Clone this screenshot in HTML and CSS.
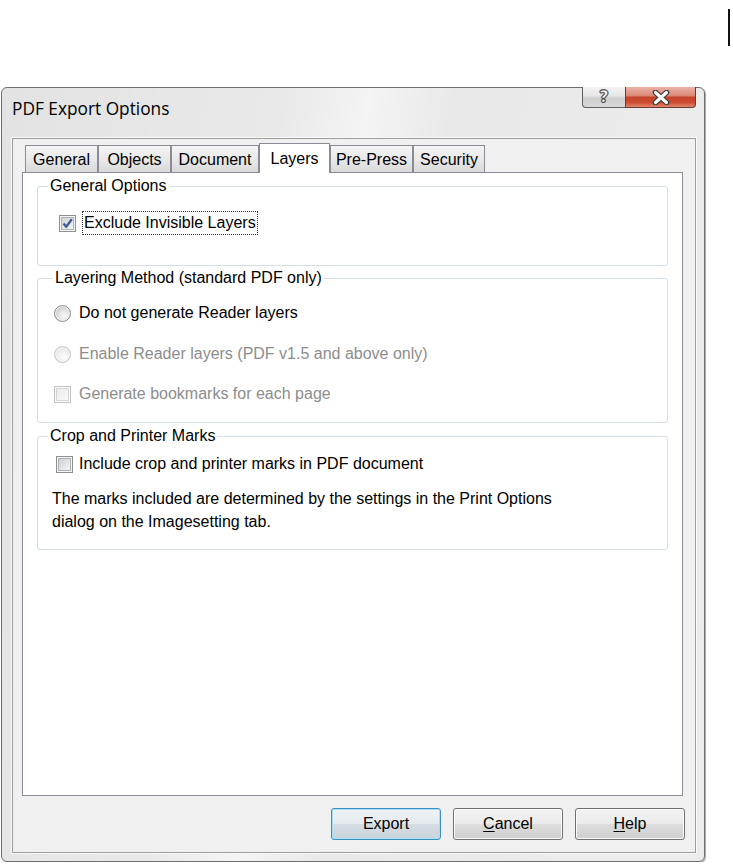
FILE: index.html
```html
<!DOCTYPE html>
<html lang="en">
<head>
    <meta charset="UTF-8">
    <meta name="viewport" content="width=device-width, initial-scale=1.0">
    <title>PDF Export Options</title>
    <link rel="stylesheet" href="styles.css">
</head>
<body>

    <span class="edge-mark"></span>

    <div class="window">
        <div class="titlebar">
            <span class="title">PDF Export Options</span>
            <div class="caption-buttons">
                <span class="cap-btn help-btn">?</span>
                <span class="cap-btn close-btn">
                    <svg width="20" height="15" viewBox="0 0 20 15">
                        <path d="M4.5 2.5 L15.5 12.5 M15.5 2.5 L4.5 12.5" stroke="#3b3b3b" stroke-width="5.6" stroke-linecap="round"/>
                        <path d="M4.5 2.5 L15.5 12.5 M15.5 2.5 L4.5 12.5" stroke="#fff" stroke-width="3.2" stroke-linecap="round"/>
                    </svg>
                </span>
            </div>
        </div>

        <div class="client">
            <div class="tabs">
                <span class="tab tab-general">General</span>
                <span class="tab tab-objects">Objects</span>
                <span class="tab tab-document">Document</span>
                <span class="tab tab-layers active">Layers</span>
                <span class="tab tab-prepress">Pre-Press</span>
                <span class="tab tab-security">Security</span>
            </div>

            <div class="tab-page">
                <fieldset class="group group-general">
                    <legend>General Options</legend>
                    <label class="option option-exclude">
                        <span class="checkbox">
                            <svg width="13" height="13" viewBox="0 0 13 13">
                                <path d="M2.5 6.5 L5.2 9.8 L10.8 2.2" fill="none" stroke="#3e5b92" stroke-width="2.3" stroke-linejoin="round"/>
                            </svg>
                        </span>
                        <span class="focus">Exclude Invisible Layers</span>
                    </label>
                </fieldset>

                <fieldset class="group group-layering">
                    <legend>Layering Method (standard PDF only)</legend>
                    <label class="option">
                        <span class="radio"></span>
                        <span>Do not generate Reader layers</span>
                    </label>
                    <label class="option option-spaced disabled">
                        <span class="radio"></span>
                        <span>Enable Reader layers (PDF v1.5 and above only)</span>
                    </label>
                    <label class="option option-last disabled">
                        <span class="checkbox"></span>
                        <span>Generate bookmarks for each page</span>
                    </label>
                </fieldset>

                <fieldset class="group group-marks">
                    <legend>Crop and Printer Marks</legend>
                    <label class="option">
                        <span class="checkbox"></span>
                        <span>Include crop and printer marks in PDF document</span>
                    </label>
                    <p class="note">The marks included are determined by the settings in the Print Options<br>dialog on the Imagesetting tab.</p>
                </fieldset>
            </div>

            <div class="buttons">
                <button class="btn default">Export</button>
                <button class="btn"><u>C</u>ancel</button>
                <button class="btn"><u>H</u>elp</button>
            </div>
        </div>
    </div>

</body>
</html>
```

FILE: styles.css
```css
/* Windows 7 style dialog */
* {
    box-sizing: border-box;
}

body {
    margin: 0;
    padding: 87px 0 0 1px;
    background-color: #fff;
    font-family: "Liberation Sans", Arial, sans-serif;
    font-size: 16px;
    line-height: 20px;
    color: #000;
}

.edge-mark {
    position: absolute;
    left: 728px;
    top: 9px;
    width: 2px;
    height: 37px;
    background-color: #111;
}

.window {
    width: 704px;
    height: 775px;
    border: 1px solid #6e6e6e;
    border-radius: 6px;
    padding: 0 8px 8px 10px;
    display: flex;
    flex-direction: column;
    background: linear-gradient(100deg, #e3e3e3 0%, #e9e9e9 34%, #f4f4f4 44%, #e9e9e9 54%, #ececec 100%);
    box-shadow: 1px 1px 1px rgba(0, 0, 0, 0.35);
}

.titlebar {
    height: 50px;
    display: flex;
    align-items: flex-start;
}

.title {
    font-family: "Open Sans", "Liberation Sans", sans-serif;
    font-size: 17.3px;
    line-height: 20px;
    padding-top: 11px;
}

.caption-buttons {
    margin-left: auto;
    margin-top: -1px;
    display: flex;
}

.cap-btn {
    height: 21px;
    display: flex;
    align-items: center;
    justify-content: center;
    border: 1px solid #5f5f5f;
    border-top: none;
}

.help-btn {
    width: 43px;
    border-right: none;
    border-radius: 0 0 0 4px;
    background: linear-gradient(#f4f4f4 0%, #e6e6e6 45%, #cfcfcf 55%, #d9d9d9 100%);
    font-family: "DejaVu Sans", sans-serif;
    font-weight: bold;
    font-size: 16px;
    line-height: 18px;
    color: #fff;
    -webkit-text-stroke: 0.6px #4a4a4a;
    text-shadow: 1px 0 #555, -1px 0 #555, 0 1px #555, 0 -1px #555;
}

.close-btn {
    width: 71px;
    border-radius: 0 0 4px 0;
    border-color: #6a3a30;
    background: linear-gradient(#eab1a5 0%, #dc8c7a 42%, #c7442c 52%, #cf4c33 78%, #e2866c 100%);
}

/* client area */
.client {
    flex: 1;
    border: 1px solid #9c9c9c;
    box-shadow: 0 0 0 1px #fafafa;
    background-color: #f0f0f0;
    padding: 4px 10px 12px 9px;
    display: flex;
    flex-direction: column;
}

.tabs {
    height: 29px;
    padding-left: 3px;
    display: flex;
    align-items: flex-end;
    position: relative;
    z-index: 1;
}

.tab {
    height: 27px;
    padding-top: 2px;
    border: 1px solid #898c95;
    border-bottom: none;
    display: flex;
    align-items: center;
    justify-content: center;
    background: linear-gradient(#f4f4f4, #e9e9e9 50%, #d9d9d9);
}

.tab.active {
    height: 30px;
    padding-top: 0;
    margin-bottom: -1px;
    background: #fff;
}

.tab-general { width: 73px; }
.tab-objects { width: 73px; }
.tab-document { width: 88px; }
.tab-layers { width: 71px; }
.tab-prepress { width: 83px; }
.tab-security { width: 72px; }

.tab-page {
    flex: 1;
    margin-right: 2px;
    padding: 4px 14px 0 14px;
    border: 1px solid #898c95;
    background-color: #fff;
}

/* group boxes */
.group {
    margin: 0;
    padding: 0 0 16px 0;
    min-width: 0;
    border: 1px solid #d5dfe5;
    border-radius: 3px;
}

.group legend {
    margin-left: 10px;
    padding: 0 2px;
    line-height: 18px;
}

.group-general {
    padding-top: 16px;
    padding-bottom: 30px;
}

.group-layering {
    margin-top: 3px;
    padding-top: 14px;
}

.group-layering legend {
    margin-left: 15px;
}

.group-marks {
    margin-top: 4px;
    padding-top: 7px;
}

.option {
    height: 24px;
    display: flex;
    align-items: center;
    gap: 8px;
    margin-left: 16px;
}

.option-spaced {
    margin-top: 17px;
}

.option-last {
    margin-top: 16px;
}

.option-exclude {
    margin-left: 21px;
    gap: 6px;
}

.group-marks .option {
    margin-left: 18px;
    gap: 6px;
}

.disabled {
    color: #8d8d8d;
}

.focus {
    border: 1px dotted #333;
    padding: 1px 1px;
    line-height: 20px;
}

.checkbox {
    width: 17px;
    height: 17px;
    flex: none;
    display: flex;
    align-items: center;
    justify-content: center;
    border: 1px solid #8e8f8f;
    background: linear-gradient(135deg, #c6cacf 0%, #e4e6e8 55%, #f8f8f8 100%);
    box-shadow: inset 0 0 0 1px #f6f6f6, inset 0 0 0 2px #adb2b8;
}

.disabled .checkbox {
    border-color: #c2c2c2;
    background: linear-gradient(135deg, #e9e9e9 0%, #f4f4f4 60%, #fbfbfb 100%);
    box-shadow: inset 0 0 0 1px #fbfbfb, inset 0 0 0 2px #d6d6d6;
}

.radio {
    width: 17px;
    height: 17px;
    flex: none;
    border-radius: 50%;
    border: 1px solid #8a8b8b;
    background: radial-gradient(circle at 62% 66%, #fbfbfb 0%, #e6e6e6 35%, #c4c4c4 80%, #b9b9b9 100%);
    box-shadow: inset 0 0 0 1px #f3f3f3;
}

.disabled .radio {
    border-color: #c4c4c4;
    background: radial-gradient(circle at 62% 66%, #fdfdfd 0%, #f1f1f1 40%, #dedede 100%);
}

.note {
    margin: 11px 0 0 14px;
    line-height: 23px;
}

/* bottom buttons */
.buttons {
    margin-top: 12px;
    display: flex;
    justify-content: flex-end;
    gap: 12px;
}

.btn {
    width: 110px;
    height: 32px;
    padding: 0;
    font-family: inherit;
    font-size: 16px;
    color: #000;
    border: 1px solid #707070;
    border-radius: 3px;
    background: linear-gradient(#f2f2f2 0%, #ebebeb 49%, #dddddd 50%, #cfcfcf 100%);
    box-shadow: inset 0 0 0 1px #fcfcfc;
}

.btn.default {
    border-color: #3c8dc0;
    background: linear-gradient(#eef3f6 0%, #e4ebf0 49%, #d6dee4 50%, #c9d3da 100%);
    box-shadow: inset 0 0 0 1px #a6e1f8;
}

.btn u {
    text-decoration-thickness: 1px;
    text-underline-offset: 2px;
}
```
